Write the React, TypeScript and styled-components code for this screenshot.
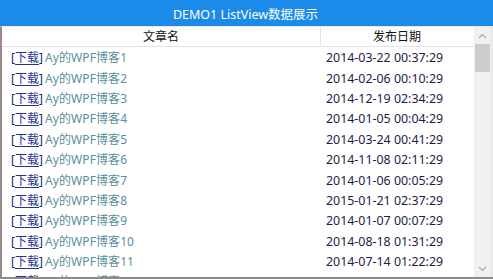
import React from 'react';
import styled, { createGlobalStyle } from 'styled-components';

const GlobalStyle = createGlobalStyle`
    html, body {
        margin: 0;
        padding: 0;
        background: #ffffff;
    }
    body {
        font-family: "Noto Sans", "Noto Sans CJK SC", sans-serif;
    }
`;

const Window = styled.div`
    width: 493px;
    height: 279px;
    display: flex;
    flex-direction: column;
    overflow: hidden;
    box-sizing: border-box;
    border-bottom: 2px solid #8c8c8c;
`;

const TitleBar = styled.div`
    height: 26px;
    flex-shrink: 0;
    background: #1b8ae8;
    color: #ffffff;
    font-size: 12.5px;
    display: flex;
    align-items: center;
    justify-content: center;
    padding-right: 2px;
`;

const Body = styled.div`
    flex: 1;
    display: flex;
    min-height: 0;
    border-left: 2px solid #a08787;
    border-right: 2px solid #e8e8e8;
    border-top: 1px solid #e6e6e6;
`;

const ListArea = styled.div`
    flex: 1;
    display: flex;
    flex-direction: column;
    min-width: 0;
`;

const Header = styled.div`
    height: 19px;
    flex-shrink: 0;
    display: grid;
    grid-template-columns: 319px 1fr;
    border-bottom: 1px solid #e3e3e3;
    font-size: 12px;
    color: #111111;
`;

const HeaderCell = styled.div<{ $last?: boolean }>`
    display: flex;
    align-items: center;
    justify-content: center;
    padding-bottom: 1px;
    border-right: 1px solid ${(p) => (p.$last ? 'transparent' : '#e3e3e3')};
`;

const Rows = styled.div`
    flex: 1;
    overflow: hidden;
    padding-top: 1px;
`;

const Row = styled.div`
    height: 20.4px;
    display: grid;
    grid-template-columns: 319px 1fr;
    font-size: 12px;
    line-height: 16px;
    align-items: center;
`;

const TitleCell = styled.div`
    padding-left: 9px;
    white-space: nowrap;
`;

const Link = styled.span`
    color: #1d2470;
    margin-right: 2px;
    span {
        text-decoration: underline;
        text-underline-offset: 2px;
        color: #1f3590;
    }
`;

const Name = styled.span`
    color: #5a8f9b;
    letter-spacing: 0.1px;
`;

const DateCell = styled.div`
    padding-left: 5px;
    color: #1d1d4a;
    white-space: nowrap;
    font-size: 12.4px;
`;

const ScrollBar = styled.div`
    width: 17px;
    flex-shrink: 0;
    background: #f0f0f0;
    display: flex;
    flex-direction: column;
    align-items: center;
`;

const Arrow = styled.div`
    height: 17px;
    width: 17px;
    display: flex;
    align-items: center;
    justify-content: center;
`;

const Thumb = styled.div`
    width: 15px;
    height: 28px;
    background: #cdcdcd;
`;

const Track = styled.div`
    flex: 1;
`;

const rows = [
    ['Ay的WPF博客1', '2014-03-22 00:37:29'],
    ['Ay的WPF博客2', '2014-02-06 00:10:29'],
    ['Ay的WPF博客3', '2014-12-19 02:34:29'],
    ['Ay的WPF博客4', '2014-01-05 00:04:29'],
    ['Ay的WPF博客5', '2014-03-24 00:41:29'],
    ['Ay的WPF博客6', '2014-11-08 02:11:29'],
    ['Ay的WPF博客7', '2014-01-06 00:05:29'],
    ['Ay的WPF博客8', '2015-01-21 02:37:29'],
    ['Ay的WPF博客9', '2014-01-07 00:07:29'],
    ['Ay的WPF博客10', '2014-08-18 01:31:29'],
    ['Ay的WPF博客11', '2014-07-14 01:22:29'],
    ['Ay的WPF博客12', '2014-06-22 01:13:29'],
];

const Chevron = ({ up }: { up?: boolean }) => (
    <svg width="9" height="6" viewBox="0 0 9 6">
        <path d={up ? 'M1 5 L4.5 1.5 L8 5' : 'M1 1 L4.5 4.5 L8 1'} fill="none" stroke="#a6a6a6" strokeWidth="1.2" />
    </svg>
);

export default function App() {
    return (
        <>
            <GlobalStyle />
            <Window>
                <TitleBar>DEMO1 ListView数据展示</TitleBar>
                <Body>
                    <ListArea>
                        <Header>
                            <HeaderCell>文章名</HeaderCell>
                            <HeaderCell $last>发布日期</HeaderCell>
                        </Header>
                        <Rows>
                            {rows.map(([name, date]) => (
                                <Row key={name}>
                                    <TitleCell>
                                        <Link>
                                            [<span>下载</span>]
                                        </Link>
                                        <Name>{name}</Name>
                                    </TitleCell>
                                    <DateCell>{date}</DateCell>
                                </Row>
                            ))}
                        </Rows>
                    </ListArea>
                    <ScrollBar>
                        <Arrow>
                            <Chevron up />
                        </Arrow>
                        <Thumb />
                        <Track />
                        <Arrow>
                            <Chevron />
                        </Arrow>
                    </ScrollBar>
                </Body>
            </Window>
        </>
    );
}
